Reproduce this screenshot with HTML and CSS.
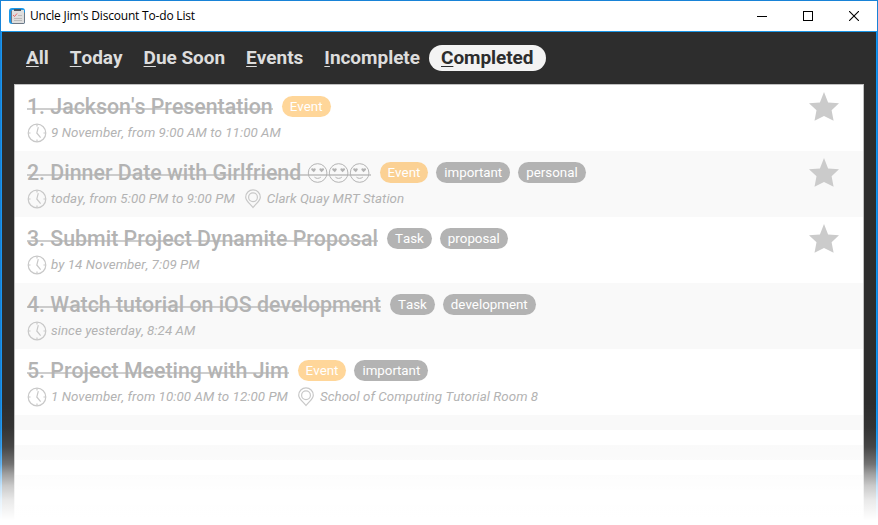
FILE: index.html
```
<!DOCTYPE html>
<html lang="en">
<head>
<meta charset="utf-8">
<title>Uncle Jim's Discount To-do List</title>
<link rel="stylesheet" href="styles.css">
</head>
<body>
<svg class="defs" width="0" height="0" aria-hidden="true">
  <symbol id="clock" viewBox="0 0 20 20"><g fill="none" stroke="currentColor" stroke-width="1.2"><circle cx="10" cy="10" r="8.8"/><path d="M11.3 4.2 9.8 10l3.8 4.600M10 1.500v2M10 16.500v2M1.500 10h2M16.500 10h2"/></g></symbol>
  <symbol id="pin" viewBox="0 0 20 20"><g fill="none" stroke="currentColor" stroke-width="1.2"><path d="M10 18.500C7.500 15 2.700 12 2.700 8.200a7.300 7.300 0 0 1 14.600 0C17.300 12 12.500 15 10 18.500Z"/><circle cx="10" cy="8.200" r="4.400"/></g></symbol>
  <symbol id="star" viewBox="0 0 30 29"><path fill="currentColor" d="m15 0 4.100 10.400L30 11.200l-7.400 7.100 2 10.400L15 23.900 5.500 28.700l2-10.400L0 11.200l10.900-.8Z"/></symbol>
  <symbol id="love" viewBox="0 0 21.5 22"><g fill="none" stroke="currentColor" stroke-width="1"><circle cx="10.700" cy="11" r="9.400"/><path d="M7.500 15.200c1.800 1.600 4.600 1.600 6.400 0"/></g><path fill="currentColor" d="M6.900 10.300 4.400 7.900C3.700 6.200 5.700 5.600 6.500 6.800 7.600 5.500 9.400 6.500 8.700 8ZM14.600 10.300l-2-2.300c-.7-1.600 1.300-2.400 2.200-1.200 1-1.200 2.900-.5 2.200 1.200Z"/></symbol>
</svg>
<div class="window">
  <header class="titlebar">
    <svg class="app-icon" width="16" height="16" viewBox="0 0 16 16"><rect width="16" height="16" rx="3" fill="#1c98e8"/><path d="M2 3h12l2 2v9a2 2 0 0 1-2 2H4l-2-2Z" fill="#6d7885"/><path d="M3 2h12v13H3Z" fill="#dedede"/><path d="M5 1h7v2H5Z" fill="#4c5660"/><path d="m4 7 1.500 1.500L8 5.500" fill="none" stroke="#ec6565"/><path d="M9 7.500h4M5 10.500h8M5 12.500h8" stroke="#bbb"/></svg>
    <h1 class="app-title">Uncle Jim's Discount To-do List</h1>
    <div class="controls">
      <svg width="10" height="10"><path d="M0 5.500h10" stroke="#000"/></svg>
      <svg width="10" height="10"><rect x=".5" y=".5" width="9" height="9" fill="none" stroke="#000"/></svg>
      <svg width="10" height="10"><path d="m0 0 10 10M10 0 0 10" stroke="#000" stroke-width="1.100"/></svg>
    </div>
  </header>
  <main class="body">
    <nav class="tabs">
      <a class="tab"><u>A</u>ll</a>
      <a class="tab"><u>T</u>oday</a>
      <a class="tab"><u>D</u>ue Soon</a>
      <a class="tab"><u>E</u>vents</a>
      <a class="tab"><u>I</u>ncomplete</a>
      <a class="tab active"><u>C</u>ompleted</a>
    </nav>
    <section class="list">
      <article class="item">
        <div class="heading"><h2 class="name">1. Jackson's Presentation</h2><span class="tag event">Event</span></div>
        <div class="details"><svg class="icon"><use href="#clock"/></svg><span>9 November, from 9:00 AM to 11:00 AM</span></div>
        <svg class="star"><use href="#star"/></svg>
      </article>
      <article class="item">
        <div class="heading"><h2 class="name">2. Dinner Date with Girlfriend <span class="faces"><svg><use href="#love"/></svg><svg><use href="#love"/></svg><svg><use href="#love"/></svg></span></h2><span class="tag event">Event</span><span class="tag">important</span><span class="tag">personal</span></div>
        <div class="details"><svg class="icon"><use href="#clock"/></svg><span>today, from 5:00 PM to 9:00 PM</span><svg class="icon place"><use href="#pin"/></svg><span>Clark Quay MRT Station</span></div>
        <svg class="star"><use href="#star"/></svg>
      </article>
      <article class="item">
        <div class="heading"><h2 class="name">3. Submit Project Dynamite Proposal</h2><span class="tag">Task</span><span class="tag">proposal</span></div>
        <div class="details"><svg class="icon"><use href="#clock"/></svg><span>by 14 November, 7:09 PM</span></div>
        <svg class="star"><use href="#star"/></svg>
      </article>
      <article class="item">
        <div class="heading"><h2 class="name">4. Watch tutorial on iOS development</h2><span class="tag">Task</span><span class="tag">development</span></div>
        <div class="details"><svg class="icon"><use href="#clock"/></svg><span>since yesterday, 8:24 AM</span></div>
      </article>
      <article class="item">
        <div class="heading"><h2 class="name">5. Project Meeting with Jim</h2><span class="tag event">Event</span><span class="tag">important</span></div>
        <div class="details"><svg class="icon"><use href="#clock"/></svg><span>1 November, from 10:00 AM to 12:00 PM</span><svg class="icon place"><use href="#pin"/></svg><span>School of Computing Tutorial Room 8</span></div>
      </article>
      <div class="stripes"></div>
    </section>
  </main>
  <div class="fade"></div>
</div>
</body>
</html>
```
FILE: styles.css
```
* { box-sizing: border-box; }
body { margin: 0; background: #fff; font-family: Roboto, "Liberation Sans", sans-serif; font-kerning: none; overflow: hidden; }
h1, h2 { margin: 0; }
.defs { position: absolute; }
.window { position: relative; height: 525px; display: flex; flex-direction: column; border: solid #1883d7; border-width: 1px 1px 0; }
.titlebar { height: 31px; flex: none; display: flex; align-items: center; padding: 0 18px 1px 8px; border-bottom: 1px solid #1a96e6; }
.app-title { margin-left: 5px; font: 400 12px/20px "Open Sans", sans-serif; letter-spacing: -.19px; color: #000; }
.controls { margin-left: auto; display: flex; gap: 36px; }
.controls svg { display: block; }
.body { flex: 1; display: flex; flex-direction: column; background: #2d2d2d; padding: 0 12px; border: solid #1a96f0; border-width: 0 1px; border-right-color: #0a98fa; }
.tabs { height: 52px; flex: none; display: flex; align-items: center; gap: 21px; padding: 0 0 0 12px; font-size: 19px; font-weight: 700; letter-spacing: -.03px; color: #ddd; }
.tab { line-height: 26px; }
.tab u { text-decoration-thickness: 1px; text-underline-offset: 2px; }
.active { margin-left: -12px; padding: 0 13px 0 12px; border-radius: 13px; letter-spacing: -.08px; background: #f3f3f3; color: #2d2d2d; }
.list { flex: 1; border: solid #c0c0c0; border-width: 1px 1px 0; background: #fff; color: #b3b3b3; }
.item { position: relative; height: 66px; padding: 9px 0 0 12px; }
.item:nth-child(even) { background: #f9f9f9; }
.heading { display: flex; align-items: center; height: 25px; gap: 8px; }
.name { position: relative; font-size: 21.33px; line-height: 26px; font-weight: 500; margin-right: 1px; white-space: pre; }
.name::after { content: ""; position: absolute; left: 0; right: 0; top: 14px; height: 2px; background: #b3b3b3; opacity: .65; }
.faces { display: inline-flex; vertical-align: -4px; }
.faces svg { width: 21.33px; height: 22px; }
.tag { height: 21px; line-height: 21px; padding: 0 8px; border-radius: 10.5px; background: #b3b3b3; color: #fff; font-size: 13.33px; }
.event { background: #ffd699; }
.item:nth-child(even) .event { background: #fbd194; }
.details { display: flex; align-items: center; height: 26px; font-size: 13.33px; font-style: italic; letter-spacing: .05px; }
.icon { width: 20px; height: 20px; margin: 1px 4px 0 0; color: #c8c8c8; }
.place { margin-left: 8px; }
.star { position: absolute; right: 24px; top: 7px; width: 30px; height: 29px; color: #cbcbcb; }
.stripes { height: 110px; background: repeating-linear-gradient(#f9f9f9 0 15px, #fff 15px 30px); }
.fade { position: absolute; left: -1px; right: -1px; top: 402px; height: 122px; background: linear-gradient(rgba(255,255,255,0) 0%, rgba(255,255,255,.03) 20%, rgba(255,255,255,.12) 36%, rgba(255,255,255,.33) 50%, rgba(255,255,255,.54) 58%, rgba(255,255,255,.75) 68%, rgba(255,255,255,.9) 80%, #fff 96%); }
```
